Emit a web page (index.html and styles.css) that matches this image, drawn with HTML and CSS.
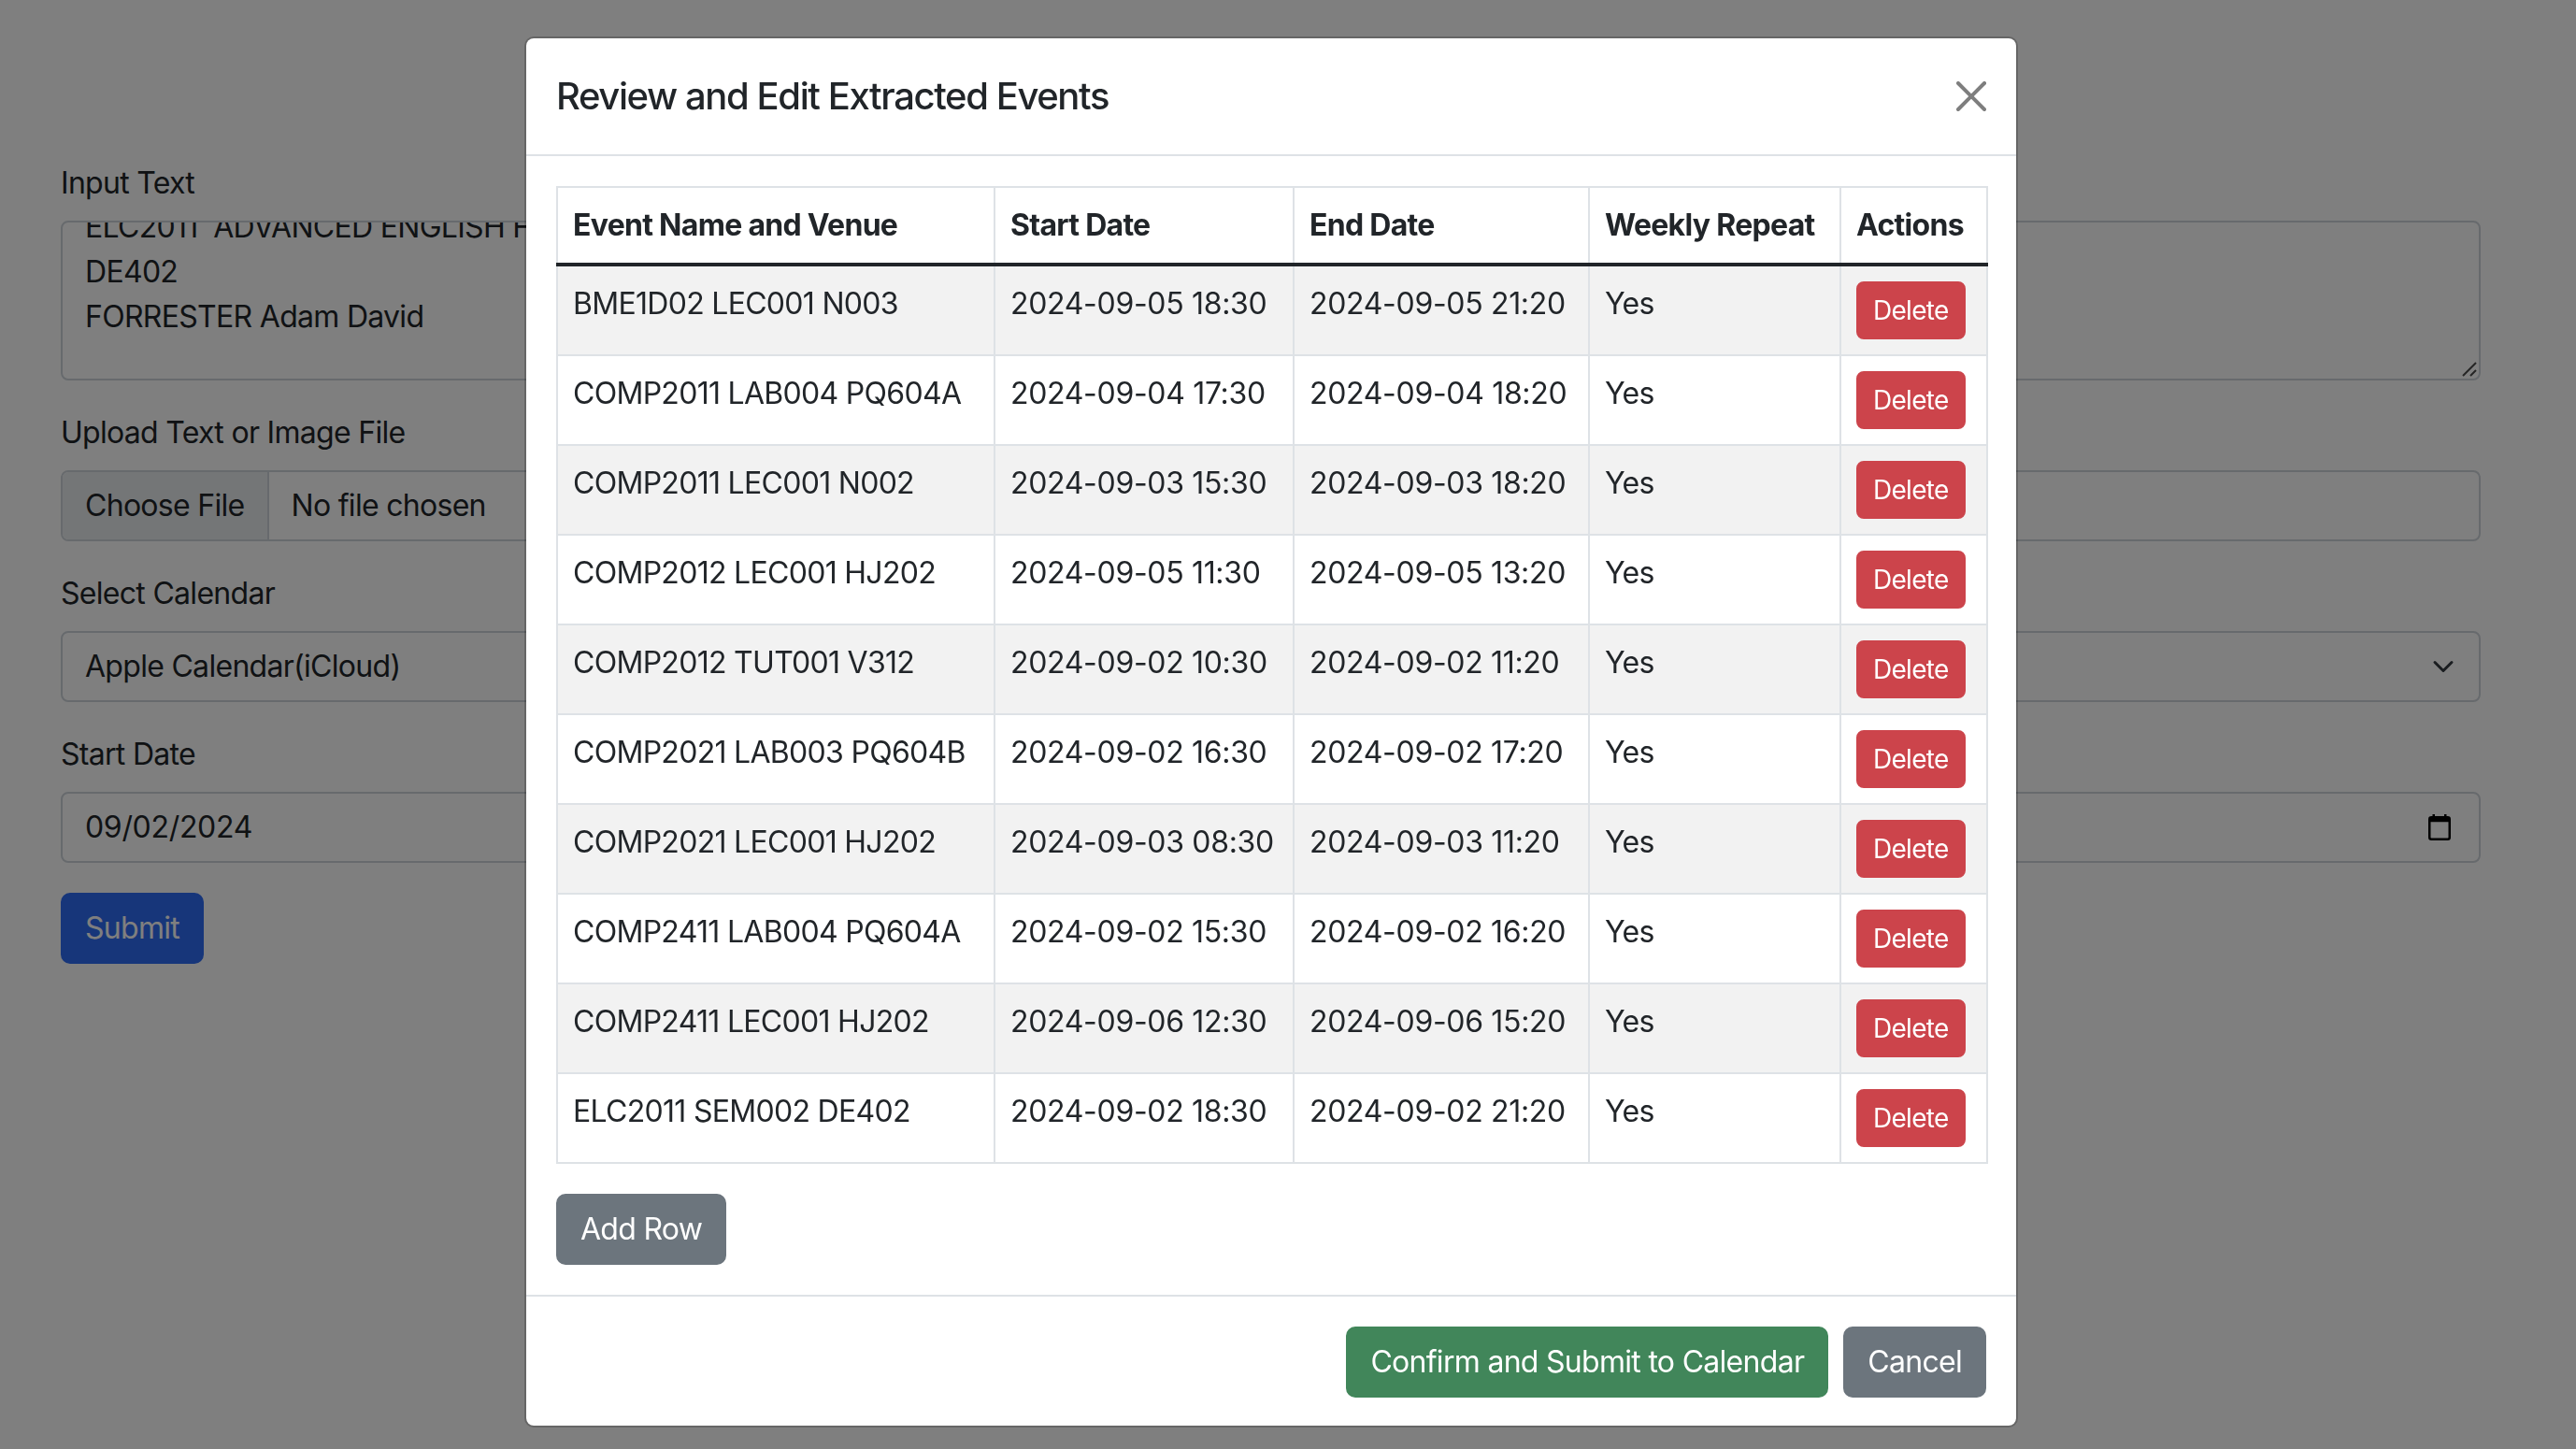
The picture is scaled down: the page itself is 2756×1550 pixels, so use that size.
FILE: index.html
```html
<!DOCTYPE html>
<html lang="en">
<head>
<meta charset="utf-8">
<title>Calendar Event Extractor</title>
<link rel="stylesheet" href="styles.css">
</head>
<body>
<main class="page">
  <div class="field">
    <label class="field-label">Input Text</label>
    <div class="control textarea">
      <div class="textarea-content">ELC2011  ADVANCED ENGLISH FOR UNIVERSITY STUDIES
DE402
FORRESTER Adam David
</div>
      <svg class="resize-grip" viewBox="0 0 16 16" width="16" height="16"><path d="M1 15L15 1M9 15L15 9" stroke="#4a4a4a" stroke-width="2" fill="none"/></svg>
    </div>
  </div>
  <div class="field">
    <label class="field-label">Upload Text or Image File</label>
    <div class="control file-control">
      <span class="file-btn">Choose File</span>
      <span class="file-name">No file chosen</span>
    </div>
  </div>
  <div class="field">
    <label class="field-label">Select Calendar</label>
    <div class="control select-control">
      <span>Apple Calendar(iCloud)</span>
      <svg class="chevron" viewBox="0 0 16 16" width="24" height="24"><path d="M2 5l6 6 6-6" stroke="#343a40" stroke-width="2" stroke-linecap="round" stroke-linejoin="round" fill="none"/></svg>
    </div>
  </div>
  <div class="field">
    <label class="field-label">Start Date</label>
    <div class="control date-control">
      <span class="num">09/02/2024</span>
      <svg class="cal-icon" viewBox="0 0 24 28" width="24" height="28"><rect x="4.5" y="0" width="2.5" height="5" fill="#000"/><rect x="17" y="0" width="2.5" height="5" fill="#000"/><rect x="1.25" y="3.25" width="21.5" height="23.5" rx="2" ry="2" stroke="#000" stroke-width="2.5" fill="none"/><rect x="1.25" y="3.25" width="21.5" height="5" fill="#000"/></svg>
    </div>
  </div>
  <button class="btn btn-primary">Submit</button>
</main>

<div class="backdrop"></div>

<div class="modal">
  <div class="modal-dialog">
    <div class="modal-content">
      <div class="modal-header">
        <h5 class="modal-title">Review and Edit Extracted Events</h5>
        <button class="btn-close" aria-label="Close">
          <svg viewBox="0 0 16 16" width="32" height="32"><path d="M.293.293a1 1 0 011.414 0L8 6.586 14.293.293a1 1 0 111.414 1.414L9.414 8l6.293 6.293a1 1 0 01-1.414 1.414L8 9.414l-6.293 6.293a1 1 0 01-1.414-1.414L6.586 8 .293 1.707a1 1 0 010-1.414z" fill="#000"/></svg>
        </button>
      </div>
      <div class="modal-body">
        <table class="table">
          <colgroup>
            <col class="c-name"><col class="c-start"><col class="c-end"><col class="c-repeat"><col class="c-actions">
          </colgroup>
          <thead>
            <tr><th>Event Name and Venue</th><th>Start Date</th><th>End Date</th><th>Weekly Repeat</th><th>Actions</th></tr>
          </thead>
          <tbody>
            <tr><td>BME1D02 LEC001 N003</td><td class="num">2024-09-05 18:30</td><td class="num">2024-09-05 21:20</td><td>Yes</td><td><button class="btn btn-sm btn-danger">Delete</button></td></tr>
            <tr><td>COMP2011 LAB004 PQ604A</td><td class="num">2024-09-04 17:30</td><td class="num">2024-09-04 18:20</td><td>Yes</td><td><button class="btn btn-sm btn-danger">Delete</button></td></tr>
            <tr><td>COMP2011 LEC001 N002</td><td class="num">2024-09-03 15:30</td><td class="num">2024-09-03 18:20</td><td>Yes</td><td><button class="btn btn-sm btn-danger">Delete</button></td></tr>
            <tr><td>COMP2012 LEC001 HJ202</td><td class="num">2024-09-05 11:30</td><td class="num">2024-09-05 13:20</td><td>Yes</td><td><button class="btn btn-sm btn-danger">Delete</button></td></tr>
            <tr><td>COMP2012 TUT001 V312</td><td class="num">2024-09-02 10:30</td><td class="num">2024-09-02 11:20</td><td>Yes</td><td><button class="btn btn-sm btn-danger">Delete</button></td></tr>
            <tr><td>COMP2021 LAB003 PQ604B</td><td class="num">2024-09-02 16:30</td><td class="num">2024-09-02 17:20</td><td>Yes</td><td><button class="btn btn-sm btn-danger">Delete</button></td></tr>
            <tr><td>COMP2021 LEC001 HJ202</td><td class="num">2024-09-03 08:30</td><td class="num">2024-09-03 11:20</td><td>Yes</td><td><button class="btn btn-sm btn-danger">Delete</button></td></tr>
            <tr><td>COMP2411 LAB004 PQ604A</td><td class="num">2024-09-02 15:30</td><td class="num">2024-09-02 16:20</td><td>Yes</td><td><button class="btn btn-sm btn-danger">Delete</button></td></tr>
            <tr><td>COMP2411 LEC001 HJ202</td><td class="num">2024-09-06 12:30</td><td class="num">2024-09-06 15:20</td><td>Yes</td><td><button class="btn btn-sm btn-danger">Delete</button></td></tr>
            <tr><td>ELC2011 SEM002 DE402</td><td class="num">2024-09-02 18:30</td><td class="num">2024-09-02 21:20</td><td>Yes</td><td><button class="btn btn-sm btn-danger">Delete</button></td></tr>
          </tbody>
        </table>
        <button class="btn btn-secondary">Add Row</button>
      </div>
      <div class="modal-footer">
        <button class="btn btn-success">Confirm and Submit to Calendar</button>
        <button class="btn btn-secondary">Cancel</button>
      </div>
    </div>
  </div>
</div>
</body>
</html>
```

FILE: styles.css
```css
* { box-sizing: border-box; }

html, body {
  margin: 0;
  padding: 0;
}

body {
  width: 2756px;
  height: 1550px;
  overflow: hidden;
  background: #fff;
  color: #212529;
  font-family: Inter, "Liberation Sans", sans-serif;
  font-size: 32px;
  line-height: 48px;
  letter-spacing: -0.022em;
}

.num {
  letter-spacing: -0.01em;
}

/* background page */
.page {
  padding: 172px 102px 0 65px;
}

.field {
  margin-bottom: 32px;
}

.field-label {
  display: block;
  margin-bottom: 16px;
}

.control {
  display: flex;
  align-items: center;
  height: 76px;
  padding: 12px 24px;
  border: 2px solid #ced4da;
  border-radius: 8px;
  background: #fff;
  color: #212529;
}

.textarea {
  display: block;
  position: relative;
  height: 171px;
  overflow: hidden;
}

.textarea-content {
  margin-top: -31px;
  white-space: pre;
}

.resize-grip {
  position: absolute;
  right: 2px;
  bottom: 2px;
}

.file-control {
  padding: 0;
  overflow: hidden;
}

.file-btn {
  display: flex;
  align-items: center;
  height: 100%;
  padding: 0 24px;
  background: #e9ecef;
  border-right: 2px solid #ced4da;
}

.file-name {
  padding: 0 24px;
}

.select-control {
  justify-content: space-between;
  padding-right: 26px;
}

.date-control {
  justify-content: space-between;
  padding-right: 30px;
}

.cal-icon {
  display: block;
}

/* buttons */
.btn {
  display: inline-block;
  font-family: inherit;
  font-size: 32px;
  line-height: 48px;
  letter-spacing: inherit;
  padding: 12px 24px;
  border: 2px solid transparent;
  border-radius: 10px;
  color: #fff;
  cursor: pointer;
}

.btn-sm {
  font-size: 28px;
  line-height: 42px;
  padding: 8px 16px;
  border-radius: 8px;
}

.btn-primary {
  background: #2e6cf4;
  border-color: #2e6cf4;
}

.btn-danger {
  background: #cc444b;
  border-color: #cc444b;
}

.btn-secondary {
  background: #6c757d;
  border-color: #6c757d;
}

.btn-success {
  background: #41865a;
  border-color: #41865a;
}

/* modal */
.backdrop {
  position: fixed;
  inset: 0;
  background: rgba(0, 0, 0, 0.5);
}

.modal {
  position: fixed;
  inset: 0;
}

.modal-dialog {
  width: 1598px;
  margin: 39px 0 0 561px;
}

.modal-content {
  background: #fff;
  background-clip: padding-box;
  border: 2px solid rgba(0, 0, 0, 0.2);
  border-radius: 10px;
}

.modal-header {
  display: flex;
  align-items: center;
  padding: 32px;
  border-bottom: 2px solid #dee2e6;
}

.modal-title {
  margin: 0;
  font-size: 40px;
  line-height: 60px;
  font-weight: 500;
  letter-spacing: -0.035em;
}

.btn-close {
  margin-left: auto;
  width: 32px;
  height: 32px;
  padding: 0;
  border: 0;
  background: none;
  opacity: 0.5;
}

.btn-close svg {
  display: block;
}

.modal-body {
  padding: 32px;
}

.table {
  width: 100%;
  border-collapse: collapse;
  table-layout: fixed;
  margin-bottom: 32px;
}

.c-name { width: 468px; }
.c-start { width: 320px; }
.c-end { width: 316px; }
.c-repeat { width: 269px; }
.c-actions { width: 157px; }

.table th,
.table td {
  padding: 16px;
  border: 2px solid #dee2e6;
  text-align: left;
  vertical-align: top;
  white-space: nowrap;
}

.table thead th {
  font-weight: 700;
  border-bottom: 4px solid #212529;
}

.table tbody tr:nth-child(odd) td {
  background: #f2f2f2;
}

.table td .btn {
  display: block;
}

.modal-footer {
  display: flex;
  justify-content: flex-end;
  align-items: center;
  gap: 16px;
  padding: 32px 32px 30px;
  border-top: 2px solid #dee2e6;
}
```
